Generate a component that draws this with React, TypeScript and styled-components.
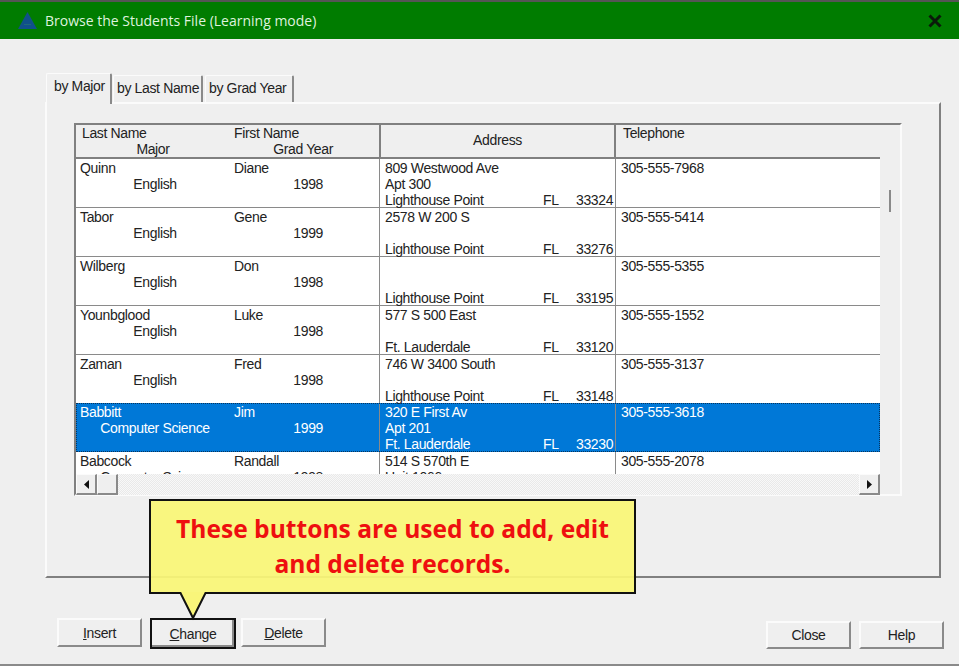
import React from "react";
import styled, { createGlobalStyle } from "styled-components";

const Global = createGlobalStyle`
  html, body { margin: 0; padding: 0; background: #efefef; }
  * { box-sizing: border-box; }
`;

const Window = styled.div`
  position: relative;
  width: 959px;
  height: 666px;
  display: flex;
  flex-direction: column;
  background: #efefef;
  font-family: "Liberation Sans", Arial, sans-serif;
  font-size: 14px;
  letter-spacing: -0.36px;
  line-height: 16px;
  color: #222;
  border-top: 2px solid #555;
  border-bottom: 2px solid #8a8a8a;
  overflow: hidden;
`;

const TitleBar = styled.div`
  height: 37px;
  flex: none;
  display: flex;
  align-items: center;
  padding: 0 17px 0 18px;
  background: #007c00;
`;

const TitleText = styled.div`
  margin-left: 8px;
  flex: 1;
  font-family: "Open Sans", sans-serif;
  font-size: 14px;
  letter-spacing: 0;
  color: #dff2df;
`;

const Body = styled.div`
  flex: 1;
  padding: 34px 15px 0 45px;
  display: flex;
  flex-direction: column;
`;

const TabStrip = styled.div`
  display: flex;
  align-items: flex-end;
  height: 29px;
  flex: none;
  padding-left: 1px;
  position: relative;
  z-index: 1;
`;

const Tab = styled.div<{ $active?: boolean; $w: number }>`
  width: ${(p) => p.$w}px;
  height: ${(p) => (p.$active ? 31 : 27)}px;
  margin-right: ${(p) => (p.$active ? 1 : 2)}px;
  margin-bottom: ${(p) => (p.$active ? -2 : 0)}px;
  padding: ${(p) => (p.$active ? "4px 0 0 7px" : "4px 0 0 3px")};
  background: #efefef;
  border-top: 1px solid #fbfbfb;
  border-left: 1px solid #fbfbfb;
  border-right: 2px solid #8a8a8a;
  border-radius: 2px 2px 0 0;
  white-space: nowrap;
`;

const Panel = styled.div`
  width: 896px;
  height: 476px;
  flex: none;
  padding: 19px 0 0 27px;
  border-top: 2px solid #fbfbfb;
  border-left: 2px solid #fbfbfb;
  border-right: 2px solid #808080;
  border-bottom: 2px solid #808080;
`;

const Grid = styled.div`
  width: 828px;
  height: 373px;
  display: flex;
  border-top: 2px solid #808080;
  border-left: 2px solid #808080;
  border-right: 2px solid #fbfbfb;
  border-bottom: 2px solid #fbfbfb;
`;

const GridMain = styled.div`
  width: 804px;
  display: flex;
  flex-direction: column;
`;

const Gutter = styled.div`
  flex: 1;
  display: flex;
  justify-content: center;
  padding-top: 65px;
`;

const Thumb = styled.div`
  width: 2px;
  height: 22px;
  background: #8a8a8a;
`;

const HeaderRow = styled.div`
  display: grid;
  grid-template-columns: 303px 237px 264px;
  height: 34px;
  flex: none;
  border-bottom: 2px solid #808080;
`;

const NameGrid = styled.div<{ $header?: boolean }>`
  display: grid;
  grid-template-columns: 158px 145px;
  grid-auto-rows: 16px;
  padding-top: ${(p) => (p.$header ? 0 : 1)}px;
`;

const LeftCell = styled.div<{ $pad: number }>`
  padding-left: ${(p) => p.$pad}px;
  white-space: nowrap;
`;

const CenterCell = styled.div<{ $shift?: number }>`
  text-align: center;
  white-space: nowrap;
  transform: translateX(${(p) => p.$shift ?? 0}px);
`;

const YearCell = styled.div<{ $right: number }>`
  text-align: right;
  padding-right: ${(p) => p.$right}px;
  white-space: nowrap;
`;

const AddressHeader = styled.div`
  display: flex;
  align-items: center;
  justify-content: center;
  padding-bottom: 2px;
  border-left: 2px solid #808080;
  border-right: 2px solid #808080;
`;

const PhoneHeader = styled.div`
  padding: 0 0 0 7px;
`;

const Rows = styled.div`
  height: 315px;
  flex: none;
  overflow: hidden;
  background: #fff;
`;

const Row = styled.div<{ $selected?: boolean }>`
  display: grid;
  grid-template-columns: 303px 237px 264px;
  height: 49px;
  margin-top: ${(p) => (p.$selected ? -1 : 0)}px;
  border-bottom: 1px solid ${(p) => (p.$selected ? "#0078d7" : "#8a8a8a")};
  background: ${(p) => (p.$selected ? "#0078d7" : "#fff")};
  color: ${(p) => (p.$selected ? "#fff" : "#222")};
  outline: ${(p) => (p.$selected ? "1px dotted #08345c" : "none")};
  outline-offset: -1px;
`;

const AddressCell = styled.div`
  display: grid;
  grid-auto-rows: 16px;
  padding: 1px 0 0 5px;
  border-left: 1px solid #8a8a8a;
  border-right: 1px solid #8a8a8a;
`;

const CityLine = styled.div`
  display: grid;
  grid-template-columns: 158px 33px auto;
  white-space: nowrap;
`;

const PhoneCell = styled.div`
  padding: 1px 0 0 5px;
`;

const HScroll = styled.div`
  flex: 1;
  display: flex;
  justify-content: space-between;
  background-color: #f3f3f3;
  background-image: repeating-conic-gradient(#e9e9e9 0 25%, #f8f8f8 0 50%);
  background-size: 2px 2px;
`;

const ScrollGroup = styled.div`
  display: flex;
`;

const ScrollButton = styled.div`
  width: 21px;
  height: 21px;
  display: flex;
  align-items: center;
  justify-content: center;
  background: #efefef;
  border-top: 1px solid #fbfbfb;
  border-left: 1px solid #fbfbfb;
  border-right: 2px solid #8a8a8a;
  border-bottom: 2px solid #8a8a8a;
`;

const Footer = styled.div`
  flex: 1;
  display: flex;
  justify-content: space-between;
  padding: 40px 0 0 12px;
`;

const ButtonGroup = styled.div<{ $top?: number }>`
  display: flex;
  gap: 8px;
  align-items: flex-start;
  padding-top: ${(p) => p.$top ?? 0}px;
`;

const PushButton = styled.button<{ $focused?: boolean; $w: number; $h?: number }>`
  width: ${(p) => p.$w}px;
  height: ${(p) => p.$h ?? 29}px;
  padding: 0;
  margin-right: ${(p) => (p.$focused ? -3 : 0)}px;
  background: #efefef;
  font: inherit;
  letter-spacing: inherit;
  color: #222;
  border-top: 2px solid ${(p) => (p.$focused ? "#111" : "#fbfbfb")};
  border-left: 2px solid ${(p) => (p.$focused ? "#111" : "#fbfbfb")};
  border-right: 2px solid ${(p) => (p.$focused ? "#111" : "#8a8a8a")};
  border-bottom: 2px solid ${(p) => (p.$focused ? "#111" : "#8a8a8a")};
  box-shadow: ${(p) => (p.$focused ? "inset -2px -2px 0 #8a8a8a" : "none")};
`;

const Mnemonic = styled.span`
  text-decoration: underline;
`;

const Callout = styled.div`
  position: absolute;
  left: 149px;
  top: 497px;
  width: 487px;
  height: 95px;
  display: flex;
  align-items: center;
  justify-content: center;
  text-align: center;
  padding: 0 20px 2px;
  background: rgba(250, 246, 118, 0.93);
  border: 2px solid #111;
  font-family: "Open Sans", sans-serif;
  font-weight: 700;
  font-size: 24.6px;
  letter-spacing: 0;
  line-height: 35px;
  color: #ee0f0f;
`;

const CalloutTail = styled.svg`
  position: absolute;
  left: 179px;
  top: 590px;
`;

type Student = {
  last: string;
  first: string;
  major: string;
  year: string;
  a1: string;
  a2: string;
  city: string;
  zip: string;
  phone: string;
  selected?: boolean;
};

const students: Student[] = [
  { last: "Quinn", first: "Diane", major: "English", year: "1998", a1: "809 Westwood Ave", a2: "Apt 300", city: "Lighthouse Point", zip: "33324", phone: "305-555-7968" },
  { last: "Tabor", first: "Gene", major: "English", year: "1999", a1: "2578 W 200 S", a2: "", city: "Lighthouse Point", zip: "33276", phone: "305-555-5414" },
  { last: "Wilberg", first: "Don", major: "English", year: "1998", a1: "", a2: "", city: "Lighthouse Point", zip: "33195", phone: "305-555-5355" },
  { last: "Younbglood", first: "Luke", major: "English", year: "1998", a1: "577 S 500 East", a2: "", city: "Ft. Lauderdale", zip: "33120", phone: "305-555-1552" },
  { last: "Zaman", first: "Fred", major: "English", year: "1998", a1: "746 W 3400 South", a2: "", city: "Lighthouse Point", zip: "33148", phone: "305-555-3137" },
  { last: "Babbitt", first: "Jim", major: "Computer Science", year: "1999", a1: "320 E First Av", a2: "Apt 201", city: "Ft. Lauderdale", zip: "33230", phone: "305-555-3618", selected: true },
  { last: "Babcock", first: "Randall", major: "Computer Science", year: "1998", a1: "514 S 570th E", a2: "Unit 1066", city: "Lighthouse Point", zip: "33100", phone: "305-555-2078" },
];

export default function App() {
  return (
    <>
      <Global />
      <Window>
        <TitleBar>
          <svg width="19" height="18" viewBox="0 0 19 18">
            <path d="M9.5 0 L19 17 H0 Z" fill="#10508a" />
            <path d="M6 12.5 H13" stroke="#1d6a78" strokeWidth="1" />
          </svg>
          <TitleText>Browse the Students File (Learning mode)</TitleText>
          <svg width="14" height="14" viewBox="0 0 14 14">
            <path d="M1.5 1.5 L12.5 12.5 M12.5 1.5 L1.5 12.5" stroke="#0a1a0a" strokeWidth="3" />
          </svg>
        </TitleBar>
        <Body>
          <TabStrip>
            <Tab $active $w={66}>by Major</Tab>
            <Tab $w={90}>by Last Name</Tab>
            <Tab $w={89}>by Grad Year</Tab>
          </TabStrip>
          <Panel>
            <Grid>
              <GridMain>
                <HeaderRow>
                  <NameGrid $header>
                    <LeftCell $pad={6}>Last Name</LeftCell>
                    <LeftCell $pad={0}>First Name</LeftCell>
                    <CenterCell $shift={-2}>Major</CenterCell>
                    <YearCell $right={46}>Grad Year</YearCell>
                  </NameGrid>
                  <AddressHeader>Address</AddressHeader>
                  <PhoneHeader>Telephone</PhoneHeader>
                </HeaderRow>
                <Rows>
                  {students.map((s) => (
                    <Row key={s.last} $selected={s.selected}>
                      <NameGrid>
                        <LeftCell $pad={4}>{s.last}</LeftCell>
                        <LeftCell $pad={0}>{s.first}</LeftCell>
                        <CenterCell>{s.major}</CenterCell>
                        <YearCell $right={56}>{s.year}</YearCell>
                      </NameGrid>
                      <AddressCell>
                        <div>{s.a1}</div>
                        <div>{s.a2}</div>
                        <CityLine>
                          <span>{s.city}</span>
                          <span>FL</span>
                          <span>{s.zip}</span>
                        </CityLine>
                      </AddressCell>
                      <PhoneCell>{s.phone}</PhoneCell>
                    </Row>
                  ))}
                </Rows>
                <HScroll>
                  <ScrollGroup>
                    <ScrollButton>
                      <svg width="5" height="9" viewBox="0 0 5 9"><path d="M5 0 V9 L0 4.5 Z" fill="#111" /></svg>
                    </ScrollButton>
                    <ScrollButton />
                  </ScrollGroup>
                  <ScrollButton>
                    <svg width="5" height="9" viewBox="0 0 5 9"><path d="M0 0 V9 L5 4.5 Z" fill="#111" /></svg>
                  </ScrollButton>
                </HScroll>
              </GridMain>
              <Gutter><Thumb /></Gutter>
            </Grid>
          </Panel>
          <Footer>
            <ButtonGroup>
              <PushButton $w={85}><Mnemonic>I</Mnemonic>nsert</PushButton>
              <PushButton $w={86} $h={31} $focused><Mnemonic>C</Mnemonic>hange</PushButton>
              <PushButton $w={85}><Mnemonic>D</Mnemonic>elete</PushButton>
            </ButtonGroup>
            <ButtonGroup $top={3}>
              <PushButton $w={85} $h={28}>Close</PushButton>
              <PushButton $w={85} $h={28}>Help</PushButton>
            </ButtonGroup>
          </Footer>
        </Body>
        <Callout>These buttons are used to add, edit and delete records.</Callout>
        <CalloutTail width="30" height="30" viewBox="0 0 30 30">
          <path d="M1 0 L14 26 L27 0" fill="#f9f57a" stroke="#111" strokeWidth="2" />
        </CalloutTail>
      </Window>
    </>
  );
}
